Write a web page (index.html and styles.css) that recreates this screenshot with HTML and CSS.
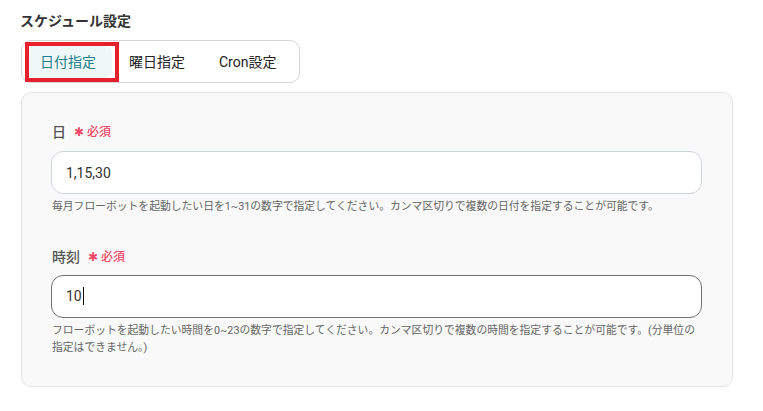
FILE: index.html
```html
<!DOCTYPE html>
<html lang="ja">
<head>
<meta charset="utf-8">
<link rel="stylesheet" href="styles.css">
</head>
<body>
<div class="page">
  <div class="title">スケジュール設定</div>
  <div class="tabs">
    <div class="tab tab-active">日付指定</div>
    <div class="tab">曜日指定</div>
    <div class="tab tab-last">Cron設定</div>
    <div class="highlight"></div>
  </div>
  <div class="panel">
    <div class="field">
      <div class="label">日<span class="req"><span class="ast">✱</span>必須</span></div>
      <div class="input">1,15,30</div>
      <div class="help">毎月フローボットを起動したい日を1~31の数字で指定してください。カンマ区切りで複数の日付を指定することが可能です。</div>
    </div>
    <div class="field field-second">
      <div class="label">時刻<span class="req"><span class="ast">✱</span>必須</span></div>
      <div class="input input-focus">10<span class="caret"></span></div>
      <div class="help">フローボットを起動したい時間を0~23の数字で指定してください。カンマ区切りで複数の時間を指定することが可能です。(分単位の指定はできません。)</div>
    </div>
  </div>
</div>
</body>
</html>
```

FILE: styles.css
```css
html, body {
  margin: 0;
  padding: 0;
  background: #ffffff;
}
body {
  font-family: Roboto, "Noto Sans CJK JP", sans-serif;
  color: #333333;
}
.page {
  padding: 11px 0 0 20px;
  width: 713px;
}
.title {
  font-size: 14px;
  font-weight: 700;
  line-height: 20px;
  color: #333333;
}
.tabs {
  position: relative;
  margin-top: 9px;
  margin-left: 1px;
  display: inline-flex;
  align-items: stretch;
  height: 41px;
  padding: 0 4px 0 0;
  border: 1px solid #d6d6d6;
  border-radius: 10px;
  background: #ffffff;
}
.tab {
  display: flex;
  align-items: center;
  padding: 0 17px;
  font-size: 14px;
  color: #222222;
  line-height: 20px;
}
.tab-last {
  padding-right: 19px;
}
.tab-active {
  margin: 5px 0 4px 6px;
  padding: 0 16px 0 12px;
  background: #eef8f8;
  border-radius: 7px;
  color: #237d8c;
}
.highlight {
  position: absolute;
  left: 3px;
  top: 1px;
  width: 94px;
  height: 40px;
  box-sizing: border-box;
  border: 4px solid #e8202b;
  pointer-events: none;
}
.panel {
  margin-top: 9px;
  margin-left: 1px;
  width: 650px;
  border: 1px solid #e4e4e4;
  border-radius: 10px;
  background: #f9f9f9;
  padding: 29px 30px 29px 30px;
}
.field-second {
  margin-top: 31px;
}
.label {
  display: flex;
  align-items: center;
  font-size: 14px;
  font-weight: 500;
  line-height: 20px;
  color: #555555;
}
.req {
  display: inline-flex;
  align-items: center;
  margin-left: 8px;
  font-size: 12px;
  font-weight: 500;
  color: #ef4764;
}
.ast {
  font-size: 12px;
  margin-right: 3px;
  color: #ef4764;
}
.input {
  margin-top: 9px;
  margin-left: -1px;
  height: 41px;
  border: 1px solid #cfd4dc;
  border-radius: 12px;
  background: #ffffff;
  display: flex;
  align-items: center;
  padding-left: 14px;
  font-size: 14px;
  color: #333333;
}
.input-focus {
  margin-top: 8px;
  border-color: #717171;
}
.caret {
  display: inline-block;
  width: 1px;
  height: 18px;
  background: #111111;
  margin-left: 1px;
}
.help {
  margin-top: 4px;
  font-size: 10.8px;
  line-height: 17.5px;
  color: #666666;
}
```
